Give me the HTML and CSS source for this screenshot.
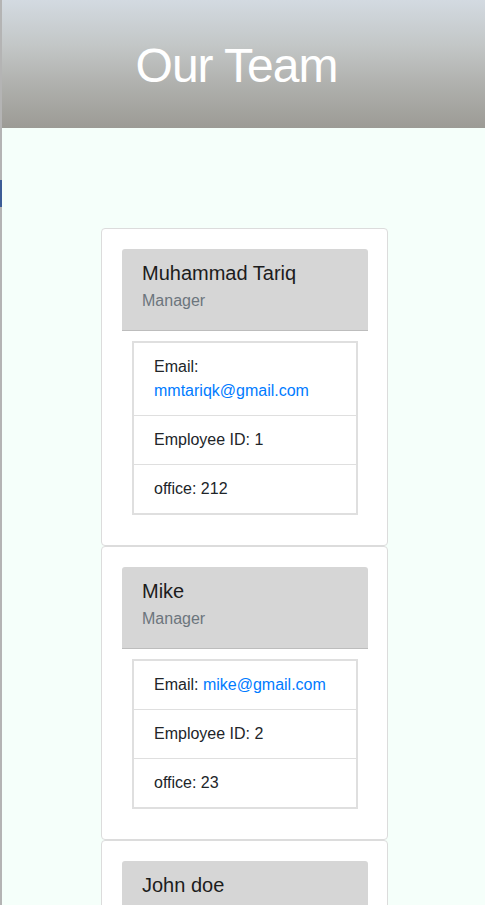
FILE: index.html
```html
<!DOCTYPE html>
<html lang="en">
<head>
<meta charset="utf-8">
<title>Our Team</title>
<link rel="stylesheet" href="styles.css">
</head>
<body>
<div class="page">
  <header class="hero">
    <h1 class="hero-title">Our Team</h1>
  </header>
  <span class="edge-mark"></span>
  <main class="team">
    <section class="card">
      <div class="card-header">
        <h2 class="name">Muhammad Tariq</h2>
        <h3 class="role">Manager</h3>
      </div>
      <ul class="list">
        <li class="item">Email: <a class="link" href="#">mmtariqk@gmail.com</a></li>
        <li class="item">Employee ID: 1</li>
        <li class="item">office: 212</li>
      </ul>
    </section>
    <section class="card">
      <div class="card-header">
        <h2 class="name">Mike</h2>
        <h3 class="role">Manager</h3>
      </div>
      <ul class="list">
        <li class="item">Email: <a class="link" href="#">mike@gmail.com</a></li>
        <li class="item">Employee ID: 2</li>
        <li class="item">office: 23</li>
      </ul>
    </section>
    <section class="card">
      <div class="card-header">
        <h2 class="name">John doe</h2>
      </div>
    </section>
  </main>
</div>
</body>
</html>
```

FILE: styles.css
```css
* { box-sizing: border-box; }
html, body { margin: 0; padding: 0; }
body {
  background: #f5fffa;
  font-family: "Liberation Sans", Arial, sans-serif;
  color: #212529;
  overflow: hidden;
}
.page {
  position: relative;
  border-left: 2px solid #b4b4b4;
  min-height: 905px;
}
.hero {
  height: 128px;
  background: linear-gradient(to bottom, #d3dae1 0%, #c3c7c7 35%, #b0b1ae 65%, #9c9b95 100%);
  padding-right: 14px;
  overflow: hidden;
}
.hero-title {
  margin: 37px 0 0;
  font-size: 48px;
  line-height: 58px;
  font-weight: 400;
  letter-spacing: -1px;
  color: #ffffff;
  text-align: center;
}
.edge-mark {
  position: absolute;
  left: -2px;
  top: 180px;
  width: 2px;
  height: 27px;
  background: #3d5d96;
}
.team {
  width: 287px;
  margin: 100px 0 0 99px;
}
.card {
  background: #ffffff;
  border: 1px solid #dcdcdc;
  border-radius: 4px;
  padding: 20px 19px 20px 20px;
}
.card-header {
  background: #d6d6d6;
  border-bottom: 1px solid #bdbdbd;
  border-radius: 3px 3px 0 0;
  padding: 12px 20px 19px;
}
.name {
  margin: 0 0 6px;
  font-size: 20px;
  line-height: 24px;
  font-weight: 400;
  color: #1c1c1c;
}
.role {
  margin: 0;
  font-size: 16px;
  line-height: 20px;
  font-weight: 400;
  color: #6c757d;
}
.list {
  list-style: none;
  margin: 10px;
  padding: 0;
  border: 2px solid #dfdfdf;
}
.item {
  padding: 12px 20px;
  font-size: 16px;
  line-height: 24px;
  border-top: 1px solid #dfdfdf;
}
.item:first-child { border-top: none; }
.link {
  color: #007bff;
  text-decoration: none;
}
```
